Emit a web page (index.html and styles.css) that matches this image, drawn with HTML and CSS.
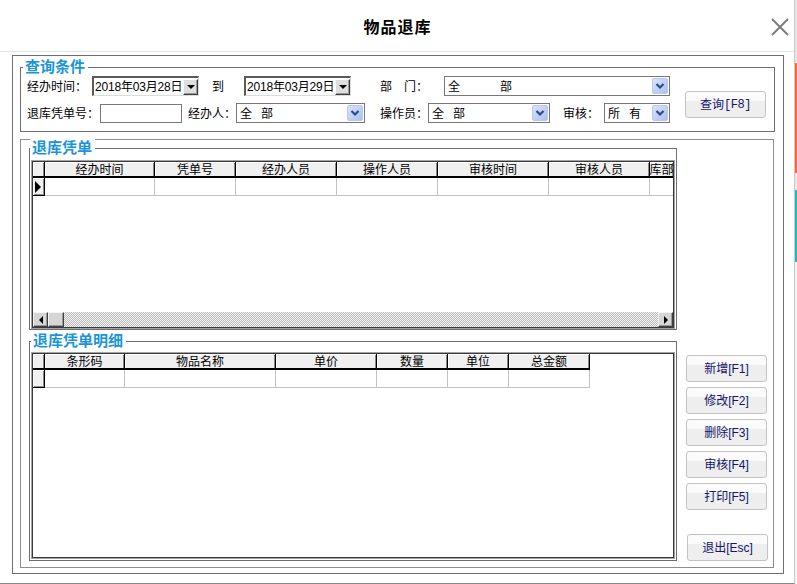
FILE: index.html
```html
<!DOCTYPE html>
<html lang="zh-CN">
<head>
<meta charset="utf-8">
<title>物品退库</title>
<link rel="stylesheet" href="styles.css">
</head>
<body>
<div class="window">
  <div class="titlebar">
    <div></div>
    <h1 class="title">物品退库</h1>
    <div class="close"><svg width="18" height="18" viewBox="0 0 18 18"><path d="M1 1L17 17M17 1L1 17" stroke="#7c7c7c" stroke-width="2" fill="none"/></svg></div>
  </div>
  <div class="frame">
    <div class="group query">
      <span class="legend legend-q">查询条件</span>
      <div class="query-rows">
        <div class="row">
          <span class="lbl l-time">经办时间：</span>
          <span class="date"><span class="date-text">2018年03月28日</span><span class="date-btn"><i class="tri-down"></i></span></span>
          <span class="lbl l-to">到</span>
          <span class="date d2"><span class="date-text">2018年03月29日</span><span class="date-btn"><i class="tri-down"></i></span></span>
          <span class="lbl l-dept">部　门：</span>
          <span class="combo c-dept"><span class="combo-text wide">全　　　部</span><span class="combo-btn"><svg width="14" height="14" viewBox="0 0 14 14"><path d="M3.5 5L7 8.5L10.5 5" stroke="#2b4a86" stroke-width="2.2" fill="none"/></svg></span></span>
        </div>
        <div class="row">
          <span class="lbl l-no">退库凭单号：</span>
          <span class="input"></span>
          <span class="lbl l-jb">经办人：</span>
          <span class="combo c-jb"><span class="combo-text"><span class="ch">全</span><span class="ch">部</span></span><span class="combo-btn"><svg width="14" height="14" viewBox="0 0 14 14"><path d="M3.5 5L7 8.5L10.5 5" stroke="#2b4a86" stroke-width="2.2" fill="none"/></svg></span></span>
          <span class="lbl l-cz">操作员：</span>
          <span class="combo c-cz"><span class="combo-text"><span class="ch">全</span><span class="ch">部</span></span><span class="combo-btn"><svg width="14" height="14" viewBox="0 0 14 14"><path d="M3.5 5L7 8.5L10.5 5" stroke="#2b4a86" stroke-width="2.2" fill="none"/></svg></span></span>
          <span class="lbl l-sh">审核：</span>
          <span class="combo c-sh"><span class="combo-text"><span class="ch">所</span><span class="ch">有</span></span><span class="combo-btn"><svg width="14" height="14" viewBox="0 0 14 14"><path d="M3.5 5L7 8.5L10.5 5" stroke="#2b4a86" stroke-width="2.2" fill="none"/></svg></span></span>
        </div>
      </div>
      <button class="btn btn-query">查询<span class="mono">[F8]</span></button>
    </div>

    <div class="panel">
      <div class="left-col">
        <div class="group g-list">
          <span class="legend legend-l">退库凭单</span>
          <div class="grid grid-list">
            <div class="grid-inner">
              <div class="grid-row head">
                <div class="ind-h"></div>
                <div class="hc w110">经办时间</div>
                <div class="hc w81">凭单号</div>
                <div class="hc w101">经办人员</div>
                <div class="hc w101">操作人员</div>
                <div class="hc w111">审核时间</div>
                <div class="hc w101">审核人员</div>
                <div class="hc w24 clip">退库部门</div>
              </div>
              <div class="grid-row">
                <div class="ind-d"><i class="tri-right"></i></div>
                <div class="dc w110"></div>
                <div class="dc w81"></div>
                <div class="dc w101"></div>
                <div class="dc w101"></div>
                <div class="dc w111"></div>
                <div class="dc w101"></div>
                <div class="dc w24"></div>
              </div>
              <div class="filler"></div>
              <div class="hscroll">
                <div class="sb-btn"><i class="tri-left"></i></div>
                <div class="sb-btn sb-thumb"></div>
                <div class="sb-track"></div>
                <div class="sb-btn"><i class="tri-right-s"></i></div>
              </div>
            </div>
          </div>
        </div>

        <div class="group g-detail">
          <span class="legend legend-d">退库凭单明细</span>
          <div class="grid grid-detail">
            <div class="grid-inner">
              <div class="grid-row head">
                <div class="ind-h"></div>
                <div class="hc w80">条形码</div>
                <div class="hc w151">物品名称</div>
                <div class="hc w101">单价</div>
                <div class="hc w71">数量</div>
                <div class="hc w61">单位</div>
                <div class="hc w81">总金额</div>
              </div>
              <div class="grid-row">
                <div class="ind-d"></div>
                <div class="dc w80"></div>
                <div class="dc w151"></div>
                <div class="dc w101"></div>
                <div class="dc w71"></div>
                <div class="dc w61"></div>
                <div class="dc w81"></div>
              </div>
            </div>
          </div>
        </div>
      </div>

      <div class="right-col">
        <button class="btn">新增[F1]</button>
        <button class="btn">修改[F2]</button>
        <button class="btn">删除[F3]</button>
        <button class="btn">审核[F4]</button>
        <button class="btn">打印[F5]</button>
        <button class="btn btn-exit">退出[Esc]</button>
      </div>
    </div>
  </div>
</div>
<div class="strip"></div>
</body>
</html>
```

FILE: styles.css
```css
* { box-sizing: border-box; margin: 0; padding: 0; }
html, body { width: 797px; height: 584px; overflow: hidden; }
body {
  display: flex;
  background: #fff;
  font-family: "Liberation Sans", "Noto Sans CJK SC", sans-serif;
  font-size: 12px;
  color: #000;
}

.window {
  width: 795px;
  height: 584px;
  border-right: 1px solid #c9c9c9;
  border-bottom: 1px solid #8a8a8a;
  background: #fff;
  display: flex;
  flex-direction: column;
  flex-shrink: 0;
}
.strip {
  width: 2px;
  height: 584px;
  flex-shrink: 0;
  background: linear-gradient(to bottom, #e6e6e6 0 63px, #f26a3c 63px 173px, #e8e8e8 173px 190px, #22b6c6 190px 262px, #f4f4f4 262px);
}

.titlebar {
  height: 52px;
  flex-shrink: 0;
  border-bottom: 1px solid #e4e4e4;
  display: grid;
  grid-template-columns: 1fr auto 1fr;
  align-items: center;
}
.title {
  font-family: "Noto Sans CJK SC", sans-serif;
  font-size: 16px;
  font-weight: bold;
  line-height: 20px;
  letter-spacing: 1px;
  margin-right: -1px;
}
.close {
  justify-self: end;
  width: 18px;
  height: 18px;
  margin-right: 5px;
  margin-top: 3px;
}
.close svg { display: block; }

.frame {
  margin: 3px 0 0 12px;
  width: 772px;
  height: 519px;
  border: 1px solid #6e6e6e;
  padding: 11px 0 0 7px;
}

.group {
  position: relative;
  border: 1px solid #6e6e6e;
}
.legend {
  position: absolute;
  top: -10px;
  background: #fff;
  color: #1b95d5;
  font-family: "Noto Sans CJK SC", sans-serif;
  font-weight: bold;
  font-size: 15px;
  line-height: 16px;
  padding: 0 3px 0 2px;
  white-space: nowrap;
}
.legend-q { left: 2px; }
.legend-l { left: 0; }
.legend-d { left: 1px; }

/* query group */
.query {
  width: 755px;
  height: 65px;
  display: flex;
  padding: 8px 0 0 6px;
}
.query-rows {
  display: flex;
  flex-direction: column;
  gap: 7px;
}
.row {
  height: 20px;
  display: flex;
  align-items: center;
}
.lbl {
  font-family: "Noto Sans CJK SC", sans-serif;
  font-size: 12px;
  line-height: 14px;
  white-space: nowrap;
  flex-shrink: 0;
}
.l-time { width: 65px; }
.l-to { width: 12px; margin-left: 13px; }
.l-dept { width: 64px; margin-left: 29px; }
.l-no { width: 73px; }
.l-jb { width: 48px; margin-left: 6px; }
.l-cz { width: 48px; margin-left: 15px; }
.l-sh { width: 41px; margin-left: 13px; }

.date {
  width: 107px;
  height: 20px;
  display: flex;
  align-items: center;
  border-style: solid;
  border-width: 2px 1px 1px 2px;
  border-color: #5a5a5a #dcdcdc #dcdcdc #5a5a5a;
  background: #fff;
  flex-shrink: 0;
}
.d2 { margin-left: 20px; }
.date-text {
  padding-left: 1px;
  font-size: 12px;
  line-height: 14px;
  letter-spacing: -0.2px;
  white-space: nowrap;
  flex: 1;
}
.date-btn {
  width: 15px;
  height: 16px;
  background: #dedede;
  border: 1px solid;
  border-color: #ffffff #3c3c3c #3c3c3c #ffffff;
  box-shadow: inset -1px -1px #9a9a9a;
  display: flex;
  align-items: center;
  justify-content: center;
  flex-shrink: 0;
}
.tri-down {
  display: block;
  width: 0; height: 0;
  border-left: 4px solid transparent;
  border-right: 4px solid transparent;
  border-top: 4px solid #000;
}

.combo {
  height: 20px;
  border: 1px solid #777;
  padding: 1px;
  display: flex;
  align-items: center;
  background: #fff;
  flex-shrink: 0;
}
.c-dept { width: 226px; }
.c-jb { width: 129px; }
.c-cz { width: 122px; }
.c-sh { width: 66px; }
.combo-text {
  flex: 1;
  display: flex;
  gap: 9px;
  padding-left: 2px;
  font-family: "Noto Sans CJK SC", sans-serif;
  font-size: 12px;
  line-height: 14px;
  white-space: pre;
}
.combo-text.wide { display: block; letter-spacing: 1px; }
.combo-btn {
  width: 16px;
  height: 16px;
  border-radius: 2px;
  background: linear-gradient(135deg, #dbe2fb 0%, #c3d1f6 50%, #a9c2ee 100%);
  border: 1px solid #b9c8ee;
  display: flex;
  align-items: center;
  justify-content: center;
  flex-shrink: 0;
}
.combo-btn svg { display: block; }

.input {
  width: 82px;
  height: 19px;
  border: 1px solid #777;
  background: #fff;
  flex-shrink: 0;
}

.btn {
  width: 81px;
  height: 27px;
  border: 1px solid #c3c3c3;
  border-radius: 3px;
  background: linear-gradient(#fbfbfb 0 36%, #eeeeee 36% 100%);
  color: #15156c;
  font-family: "Liberation Sans", "Noto Sans CJK SC", sans-serif;
  font-size: 12px;
  line-height: 14px;
  display: flex;
  align-items: center;
  justify-content: center;
  flex-shrink: 0;
}
.btn-query {
  margin-left: 15px;
  margin-top: 15px;
  align-self: flex-start;
}
.mono { font-family: "Liberation Mono", monospace; font-size: 12px; letter-spacing: -0.5px; }

/* lower panel */
.panel {
  margin-top: 7px;
  width: 754px;
  height: 429px;
  border: 1px solid #8e8e8e;
  display: flex;
  padding-left: 8px;
}
.left-col {
  width: 648px;
  margin-top: 8px;
  flex-shrink: 0;
}
.g-list {
  height: 182px;
  padding: 11px 1px 0 1px;
}
.g-detail {
  margin-top: 11px;
  height: 220px;
  padding: 10px 1px 1px 1px;
}
.right-col {
  margin-left: 9px;
  padding-top: 215px;
  display: flex;
  flex-direction: column;
  gap: 5px;
}
.btn-exit { margin-top: 19px; margin-left: 1px; }

/* grids */
.grid {
  border: 1px solid #a3a3a3;
}
.grid-list { height: 169px; }
.grid-detail { height: 207px; }
.grid-inner {
  height: 100%;
  border: 1px solid #3a3a3a;
  display: flex;
  flex-direction: column;
  overflow: hidden;
  background: #fff;
}
.grid-row {
  display: flex;
  flex-shrink: 0;
}
.ind-h, .hc {
  height: 16px;
  background: #f0f0f0;
  border-right: 1px solid #000;
  border-bottom: 2px solid #000;
  box-shadow: inset 1px 1px #fff, inset -1px 0 #8a8a8a;
  flex-shrink: 0;
}
.ind-h { width: 12px; }
.hc {
  display: flex;
  justify-content: center;
  align-items: center;
  font-family: "Noto Sans CJK SC", sans-serif;
  font-size: 12px;
  line-height: 14px;
  white-space: nowrap;
}
.hc.clip { overflow: hidden; }
.ind-d {
  width: 12px;
  height: 18px;
  background: #f0f0f0;
  border-right: 1px solid #000;
  border-bottom: 1px solid #000;
  box-shadow: inset 1px 1px #fff, inset -1px -1px #8a8a8a;
  display: flex;
  align-items: center;
  padding-left: 2px;
  flex-shrink: 0;
}
.dc {
  height: 18px;
  border-right: 1px solid #c3c3c3;
  border-bottom: 1px solid #c3c3c3;
  flex-shrink: 0;
}
.w24 { width: 24px; }
.w61 { width: 61px; }
.w71 { width: 71px; }
.w80 { width: 80px; }
.w81 { width: 81px; }
.w101 { width: 101px; }
.w110 { width: 110px; }
.w111 { width: 111px; }
.w151 { width: 151px; }

.tri-right {
  display: block;
  width: 0; height: 0;
  border-top: 6px solid transparent;
  border-bottom: 6px solid transparent;
  border-left: 6px solid #000;
}
.filler { flex: 1; }
.hscroll {
  height: 15px;
  display: flex;
  flex-shrink: 0;
}
.sb-btn {
  width: 15px;
  height: 15px;
  background: #d6d6d6;
  border: 1px solid;
  border-color: #f4f4f4 #404040 #404040 #f4f4f4;
  box-shadow: inset -1px -1px #9a9a9a;
  display: flex;
  align-items: center;
  justify-content: center;
  flex-shrink: 0;
}
.sb-thumb { width: 16px; }
.sb-track {
  flex: 1;
  background: repeating-conic-gradient(#bcbcbc 0 25%, #f2f2f2 0 50%) 0 0 / 2px 2px;
}
.tri-left {
  display: block;
  width: 0; height: 0;
  border-top: 4px solid transparent;
  border-bottom: 4px solid transparent;
  border-right: 4px solid #000;
}
.tri-right-s {
  display: block;
  width: 0; height: 0;
  border-top: 4px solid transparent;
  border-bottom: 4px solid transparent;
  border-left: 4px solid #000;
}
```
